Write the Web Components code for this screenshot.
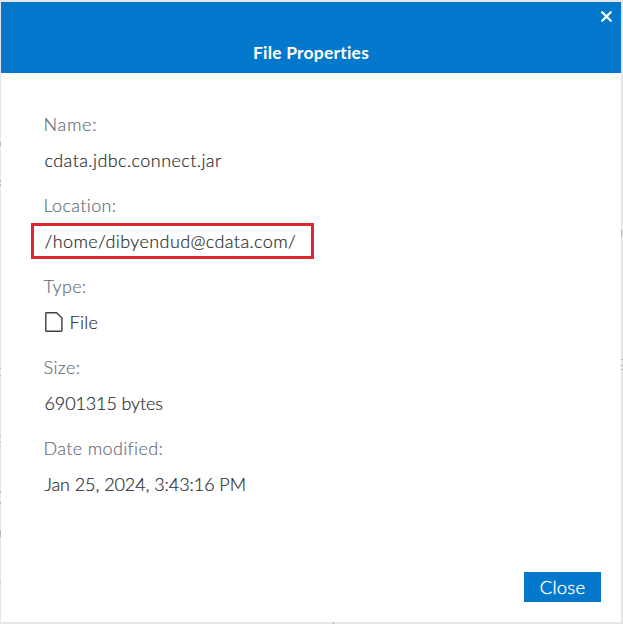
<!DOCTYPE html>
<html lang="en"><head><meta charset="utf-8"><title>File Properties</title>
<style>
html,body{margin:0;height:100%;overflow:hidden}
/* dimmed page behind the dialog, with slivers of its rows at the edges */
body{background-color:#e5e6e7;background-repeat:no-repeat;--t:linear-gradient(#b4b6b9,#b4b6b9);
background-image:var(--t),var(--t),var(--t),var(--t),var(--t),var(--t),var(--t),var(--t),var(--t),var(--t),var(--t),var(--t),var(--t),var(--t),var(--t),var(--t),var(--t);
background-position:0 142px,0 180px,0 184px,0 368px,0 375px,0 435px,0 442px,0 446px,0 491px,0 502px,0 530px,0 582px,621px 230px,621px 359px,621px 365px,621px 369px,333px 622px;
background-size:1px 4px,1px 2px,1px 2px,1px 1px,1px 1px,1px 1px,1px 1px,1px 1px,1px 2px,1px 2px,1px 7px,1px 1px,1px 7px,2px 1px,2px 1px,2px 1px,1px 2px;
font:300 18px/36px Lato,"Open Sans",sans-serif;color:#2b2d30;-webkit-text-stroke:.2px}
</style></head><body>
<properties-dialog heading="File Properties">
<property-field label="Name:" style="--label-spacing:.7px;--value-spacing:.42px">cdata.jdbc.connect.jar</property-field>
<property-field label="Location:" marked style="--label-spacing:.35px;--value-spacing:.39px">/home/dibyendud@cdata.com/</property-field>
<property-field label="Type:" style="--label-spacing:.3px;--value-spacing:.3px"><file-icon></file-icon>File</property-field>
<property-field label="Size:" style="--label-spacing:.4px;--value-spacing:-.12px">6901315 bytes</property-field>
<property-field label="Date modified:" style="--label-spacing:.35px;--value-spacing:-.08px">Jan 25, 2024, 3:43:16 PM</property-field>
<action-button slot="actions">Close</action-button>
</properties-dialog>
<script>
const define=(name,html)=>customElements.define(name,class extends HTMLElement{
  constructor(){
    super();
    const t=document.createElement('template');
    t.innerHTML=html;
    this.attachShadow({mode:'open'}).append(t.content.cloneNode(true));
  }
  connectedCallback(){
    for(const el of this.shadowRoot.querySelectorAll('[data-attr]'))
      el.textContent=this.getAttribute(el.dataset.attr)||'';
  }
});

define('file-icon',`<style>:host{display:inline-flex;width:18px;height:20px;margin-right:7px}svg{display:block}</style>
<svg width="18" height="20" viewBox="0 0 18 20" fill="none" stroke="#3d3f43" stroke-width="1.4" stroke-linejoin="round"><path d="M1.4.8H11.6L16.9 6V18.6Q16.9 19.2 16.3 19.2H1.4Q.8 19.2.8 18.6V1.4Q.8.8 1.4.8Z"/></svg>`);

define('property-field',`<style>
:host{display:block;height:81px;box-sizing:border-box}
.label{color:#69707a;letter-spacing:var(--label-spacing);height:36px}
.value{display:flex;align-items:center;width:max-content;height:36px;padding-left:1px;letter-spacing:var(--value-spacing);white-space:nowrap}
:host([marked]) .value{box-sizing:border-box;width:283px;margin-left:-12.5px;padding-left:10.5px;border:3px solid #dc2630;line-height:30px}
</style><div class="label" data-attr="label"></div><div class="value"><slot></slot></div>`);

define('action-button',`<style>
:host{display:block}
button{display:block;width:77px;height:30px;padding:0;border:0;background:#0378cd;color:#fff;font:300 18.5px/30px Lato,sans-serif;letter-spacing:.25px;-webkit-text-stroke:.35px}
</style><button><slot></slot></button>`);

define('close-icon',`<style>:host{display:block;width:11px;height:11px}svg{display:block}</style>
<svg width="11" height="11" viewBox="0 0 11 11" stroke="#fff" stroke-width="2.2" stroke-linecap="round"><path d="M1.2 1.2 9.8 9.8M9.8 1.2 1.2 9.8"/></svg>`);

define('properties-dialog',`<style>
:host{display:flex;flex-direction:column;box-sizing:border-box;width:620px;height:620px;margin:0 0 0 1px;background:#fff;position:relative;top:2px}
header{display:flex;flex-direction:column;height:71px;background:#0378cd;color:#fff}
close-icon{align-self:flex-end;margin:9px 9px 0 0}
h1{margin:17px 0 0;text-align:center;font:700 17.5px/28px Lato,sans-serif;letter-spacing:.2px;-webkit-text-stroke:0}
main{flex:1;padding:33px 43px 0 42.5px}
footer{display:flex;justify-content:flex-end;padding:0 20px 20px}
</style><header><close-icon></close-icon><h1 data-attr="heading"></h1></header>
<main><slot></slot></main><footer><slot name="actions"></slot></footer>`);
</script></body></html>
